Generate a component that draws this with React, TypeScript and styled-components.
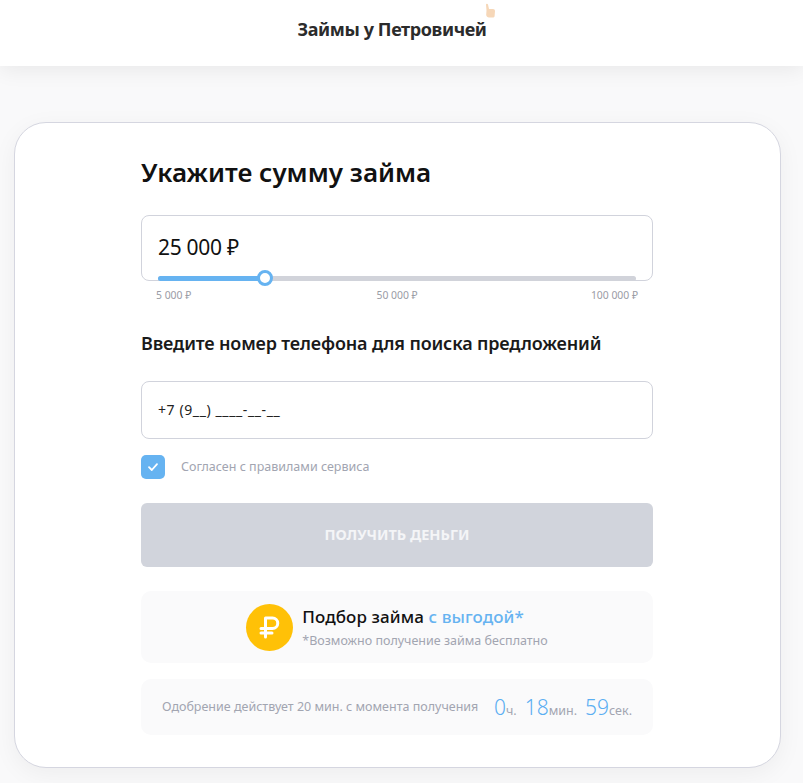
import React, { FunctionComponent, useState } from 'react';
import styled, { createGlobalStyle } from 'styled-components';

const GlobalStyle = createGlobalStyle`
    html, body {
        margin: 0;
        padding: 0;
        background: #f9f9fa;
        font-family: 'Noto Sans', 'Open Sans', sans-serif;
    }
    * {
        box-sizing: border-box;
    }
`;

const Page = styled.div`
    width: 803px;
    height: 783px;
    overflow: hidden;
    background: #f9f9fa;
`;

const Header = styled.header`
    height: 66px;
    background: #fff;
    box-shadow: 0 4px 20px rgba(0, 0, 0, 0.07);
    display: flex;
    justify-content: center;
    padding-top: 16px;
`;

const Logo = styled.div`
    position: relative;
    padding-right: 19px;
    font-size: 18px;
    line-height: 26px;
    height: 26px;
    font-weight: 700;
    color: #2b2b2b;
    letter-spacing: -0.4px;
`;

const Thumb = styled.svg`
    position: absolute;
    right: 10px;
    top: -13px;
`;

const Card = styled.main`
    margin: 56px 22px 0 14px;
    height: 646px;
    background: #fff;
    border: 1px solid #d5d6e0;
    border-radius: 32px;
    box-shadow: 0 6px 24px rgba(0, 0, 0, 0.05);
    padding: 30px 127px 0 126px;
`;

const Title = styled.h1`
    margin: 0 0 24px;
    font-size: 26px;
    line-height: 38px;
    font-weight: 600;
    color: #111;
`;

const AmountBox = styled.div`
    position: relative;
    height: 66px;
    border: 1px solid #d1d3dc;
    border-radius: 8px;
    padding: 15px 16px 0;
    font-size: 21px;
    line-height: 32px;
    color: #111;
    letter-spacing: -0.3px;
`;

const Track = styled.div`
    position: absolute;
    left: 16px;
    right: 16px;
    bottom: -1px;
    height: 5px;
    border-radius: 3px;
    background: #d1d3da;
`;

const Fill = styled.div`
    height: 100%;
    border-radius: 3px;
    background: #66b3f1;
`;

const Knob = styled.div`
    position: absolute;
    top: -6px;
    width: 16px;
    height: 16px;
    margin-left: -8px;
    border-radius: 50%;
    background: #fff;
    border: 3px solid #66b3f1;
`;

const Scale = styled.div`
    display: flex;
    justify-content: space-between;
    padding: 7px 15px 0 15px;
    font-size: 10.4px;
    line-height: 14px;
    color: #9a9ca5;
`;

const ScaleMiddle = styled.span`
    margin-left: 12px;
`;

const Subtitle = styled.h2`
    margin: 28px 0 25px;
    font-size: 18px;
    line-height: 26px;
    font-weight: 600;
    color: #1a1a1a;
    letter-spacing: -0.15px;
`;

const PhoneInput = styled.input`
    display: block;
    width: 100%;
    height: 58px;
    border: 1px solid #d1d3dc;
    border-radius: 8px;
    padding: 0 16px 2px;
    font-family: inherit;
    font-size: 14px;
    letter-spacing: 0.6px;
    color: #222;
    background: #fff;
    outline: none;
`;

const AgreeRow = styled.label`
    display: flex;
    align-items: center;
    gap: 16px;
    margin-top: 16px;
    height: 24px;
    font-size: 12.5px;
    color: #a2a5b1;
`;

const AgreeText = styled.span`
    padding-bottom: 2px;
`;

const CheckBox = styled.span`
    width: 24px;
    height: 24px;
    border-radius: 5px;
    background: #66b3f1;
    display: flex;
    align-items: center;
    justify-content: center;
`;

const SubmitButton = styled.button`
    display: block;
    width: 100%;
    height: 64px;
    margin-top: 24px;
    padding: 0 0 3px;
    border: none;
    border-radius: 6px;
    background: #d1d4dc;
    color: #f4f5f7;
    font-family: inherit;
    font-size: 14.5px;
    font-weight: 700;
`;

const PromoPanel = styled.div`
    display: flex;
    align-items: center;
    justify-content: center;
    gap: 9px;
    height: 72px;
    margin-top: 24px;
    border-radius: 10px;
    background: #fafafb;
`;

const Coin = styled.div`
    width: 47px;
    height: 47px;
    border-radius: 50%;
    background: #ffc107;
    display: flex;
    align-items: center;
    justify-content: center;
`;

const PromoText = styled.div`
    display: flex;
    flex-direction: column;
    gap: 2px;
    padding-top: 2px;
`;

const PromoTitle = styled.div`
    font-size: 17px;
    line-height: 24px;
    font-weight: 500;
    color: #111;
    letter-spacing: 0.1px;
`;

const Accent = styled.span`
    color: #66b3f1;
`;

const PromoNote = styled.div`
    font-size: 12.5px;
    line-height: 20px;
    color: #a2a5b1;
`;

const TimerPanel = styled.div`
    display: flex;
    align-items: center;
    justify-content: space-between;
    height: 56px;
    margin-top: 16px;
    padding: 0 21px;
    border-radius: 10px;
    background: #fafafb;
    font-size: 12.5px;
    color: #a2a5b1;
`;

const TimerNote = styled.span`
    padding-bottom: 2px;
`;

const Timer = styled.div`
    display: flex;
    align-items: baseline;
    gap: 8px;
    font-size: 12.5px;
`;

const TimerValue = styled.span`
    font-size: 21px;
    font-weight: 300;
    color: #5aaef2;
`;

const App: FunctionComponent = () => {
    const [phone, setPhone] = useState<string>('+7 (9__) ____-__-__');
    const percent = 22.3;

    return (
        <Page>
            <GlobalStyle />
            <Header>
                <Logo>
                    Займы у Петровичей
                    <Thumb width="12" height="20" viewBox="0 0 12 20">
                        <path
                            d="M2 1.500c0-1 1.800-1 2 0l1 4.500h4c1.200 0 2 .8 2 2l-.4 5c-.1 1-.9 1.600-2 1.600H5c-1.500 0-2.600-1-2.800-2.500L2.500 7.500z"
                            fill="#f6d7b8"
                        />
                    </Thumb>
                </Logo>
            </Header>
            <Card>
                <Title>Укажите сумму займа</Title>
                <AmountBox>
                    25 000 ₽
                    <Track>
                        <Fill style={{ width: `${percent}%` }} />
                        <Knob style={{ left: `${percent}%` }} />
                    </Track>
                </AmountBox>
                <Scale>
                    <span>5 000 ₽</span>
                    <ScaleMiddle>50 000 ₽</ScaleMiddle>
                    <span>100 000 ₽</span>
                </Scale>
                <Subtitle>Введите номер телефона для поиска предложений</Subtitle>
                <PhoneInput value={phone} onChange={(e) => setPhone(e.target.value)} />
                <AgreeRow>
                    <CheckBox>
                        <svg width="12" height="10" viewBox="0 0 12 10" fill="none">
                            <path d="M2 5.200 4.800 8 10 2.200" stroke="#fff" strokeWidth="1.800" strokeLinecap="round" strokeLinejoin="round" />
                        </svg>
                    </CheckBox>
                    <AgreeText>Согласен с правилами сервиса</AgreeText>
                </AgreeRow>
                <SubmitButton type="button">ПОЛУЧИТЬ ДЕНЬГИ</SubmitButton>
                <PromoPanel>
                    <Coin>
                        <svg width="21" height="23" viewBox="0 0 21 23" fill="none">
                            <path
                                d="M6.500 21V2h7a5 5 0 0 1 0 10.500H2M2 17h11"
                                stroke="#fff"
                                strokeWidth="3"
                                strokeLinecap="round"
                                strokeLinejoin="round"
                            />
                        </svg>
                    </Coin>
                    <PromoText>
                        <PromoTitle>
                            Подбор займа <Accent>с выгодой*</Accent>
                        </PromoTitle>
                        <PromoNote>*Возможно получение займа бесплатно</PromoNote>
                    </PromoText>
                </PromoPanel>
                <TimerPanel>
                    <TimerNote>Одобрение действует 20 мин. с момента получения</TimerNote>
                    <Timer>
                        <span><TimerValue>0</TimerValue>ч.</span>
                        <span><TimerValue>18</TimerValue>мин.</span>
                        <span><TimerValue>59</TimerValue>сек.</span>
                    </Timer>
                </TimerPanel>
            </Card>
        </Page>
    );
};

export default App;
